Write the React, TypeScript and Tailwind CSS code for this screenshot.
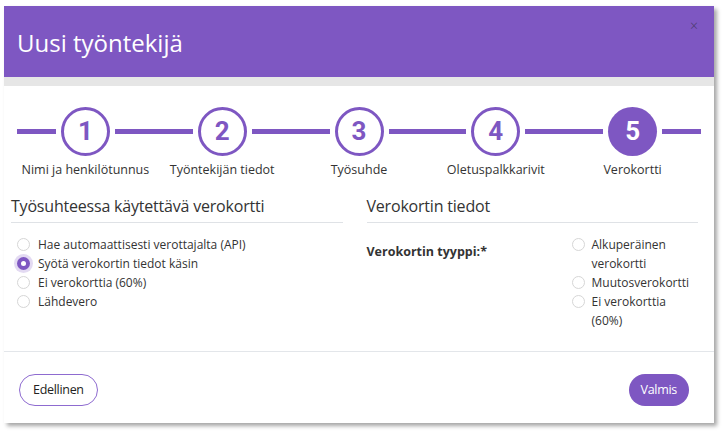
import React from 'react';

const steps = ['Nimi ja henkilötunnus', 'Työntekijän tiedot', 'Työsuhde', 'Oletuspalkkarivit', 'Verokortti'];

const Radio: React.FC<{ checked?: boolean }> = ({ checked }) =>
  checked ? (
    <span className="flex w-[13px] h-[13px] shrink-0 rounded-full bg-[#7e57c2] shadow-[0_0_0_3px_rgba(126,87,194,0.22)] items-center justify-center">
      <span className="block w-[5px] h-[5px] rounded-full bg-white" />
    </span>
  ) : (
    <span className="block w-[13px] h-[13px] shrink-0 rounded-full border border-[#d6d6d6] bg-white" />
  );

const App: React.FC = () => {
  return (
    <div className="w-[723px] h-[433px] bg-white pt-[6px] pl-[4px] font-['Open_Sans',sans-serif] text-[#333]">
      <div className="w-[710px] h-[417px] bg-white shadow-[3px_3px_4px_rgba(0,0,0,0.35)] flex flex-col">
        {/* header */}
        <div className="h-[71px] bg-[#7e57c2] flex items-start justify-between pl-[13px] pr-[16px]">
          <h1 className="mt-[22px] text-[24px] leading-[30px] text-white font-normal">Uusi työntekijä</h1>
          <span className="mt-[11px] text-[14px] leading-[18px] text-[#4b3b6b] font-light">×</span>
        </div>
        <div className="h-[9px] bg-[#e6e6e6]" />

        {/* body */}
        <div className="h-[265px]">
          <div className="grid grid-cols-5 mx-[13px] mt-[21px]">
            {steps.map((label, i) => {
              const active = i === 4;
              return (
                <div key={label} className="flex flex-col items-center">
                  <div className="flex items-center w-full gap-[5px]">
                    <div className="flex-1 h-[5px] bg-[#7e57c2]" />
                    <div
                      className={
                        active
                          ? 'w-[49px] h-[49px] rounded-full bg-[#7e57c2] flex items-center justify-center font-["Roboto",sans-serif] font-bold text-[26px] text-white'
                          : 'w-[49px] h-[49px] rounded-full border-[3px] border-[#7e57c2] bg-white flex items-center justify-center font-["Roboto",sans-serif] font-bold text-[26px] text-[#7e57c2]'
                      }
                    >
                      {i + 1}
                    </div>
                    <div className="flex-1 h-[5px] bg-[#7e57c2]" />
                  </div>
                  <span className="mt-[6px] text-[12.5px] leading-[16px] text-[#333]">{label}</span>
                </div>
              );
            })}
          </div>

          <div className="grid grid-cols-2 gap-[24px] pl-[7px] pr-[16px] mt-[18px]">
            <div>
              <h2 className="text-[16px] leading-[21px] pb-[5px] border-b border-[#dfe2e6] font-normal tracking-[-0.2px]">
                Työsuhteessa käytettävä verokortti
              </h2>
              <div className="mt-[12px] flex flex-col pl-[6px]">
                {[
                  ['Hae automaattisesti verottajalta (API)', false],
                  ['Syötä verokortin tiedot käsin', true],
                  ['Ei verokorttia (60%)', false],
                  ['Lähdevero', false],
                ].map(([t, c]) => (
                  <label key={t as string} className="flex items-center gap-[8px] h-[19px] text-[12px]">
                    <Radio checked={c as boolean} />
                    <span>{t as string}</span>
                  </label>
                ))}
              </div>
            </div>
            <div>
              <h2 className="text-[16px] leading-[21px] pb-[5px] border-b border-[#dfe2e6] font-normal tracking-[-0.2px]">
                Verokortin tiedot
              </h2>
              <div className="mt-[12px] flex">
                <span className="w-[205px] mt-[9px] text-[12.5px] leading-[16px] font-bold">Verokortin tyyppi:*</span>
                <div className="flex flex-col">
                  {['Alkuperäinen verokortti', 'Muutosverokortti', 'Ei verokorttia (60%)'].map((t) => (
                    <label key={t} className="flex items-start gap-[7px] text-[12px] leading-[19px]">
                      <span className="block mt-[3px] shrink-0">
                        <Radio />
                      </span>
                      <span className="w-[104px]">{t}</span>
                    </label>
                  ))}
                </div>
              </div>
            </div>
          </div>
        </div>

        {/* footer */}
        <div className="flex-1 border-t border-[#e3e6ea] flex items-start justify-between pl-[15px] pr-[25px] pt-[22px]">
          <button className="h-[32px] px-[13px] rounded-full border border-[#8e6bd0] bg-white text-[12.5px] tracking-[-0.3px] text-[#222]">
            Edellinen
          </button>
          <button className="h-[32px] px-[12px] rounded-full bg-[#7e57c2] text-[12.5px] tracking-[-0.3px] text-white">
            Valmis
          </button>
        </div>
      </div>
    </div>
  );
};

export default App;
